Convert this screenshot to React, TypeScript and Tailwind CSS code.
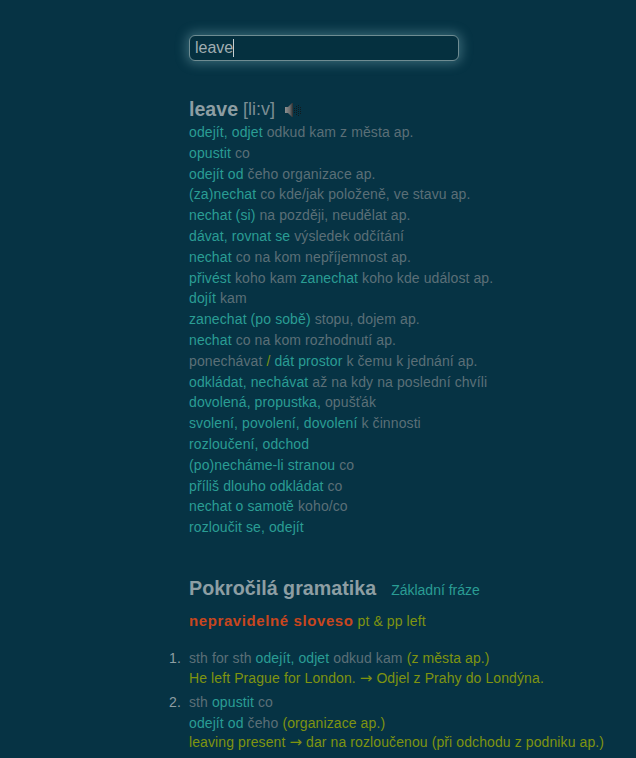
const T = ({ children }: { children: React.ReactNode }) => <span className="text-[#2a9d94]">{children}</span>;
const O = ({ children }: { children: React.ReactNode }) => <span className="text-[#7f9410]">{children}</span>;
const Arrow = () => <span className="font-['DejaVu_Sans',sans-serif] text-[15px] tracking-normal">→</span>;

const rows: React.ReactNode[] = [
  <><T>odejít, odjet</T> odkud kam z města ap.</>,
  <><T>opustit</T> co</>,
  <><T>odejít od</T> čeho organizace ap.</>,
  <><T>(za)nechat</T> co kde/jak položeně, ve stavu ap.</>,
  <><T>nechat (si)</T> na později, neudělat ap.</>,
  <><T>dávat, rovnat se</T> výsledek odčítání</>,
  <><T>nechat</T> co na kom nepříjemnost ap.</>,
  <><T>přivést</T> koho kam <T>zanechat</T> koho kde událost ap.</>,
  <><T>dojít</T> kam</>,
  <><T>zanechat (po sobě)</T> stopu, dojem ap.</>,
  <><T>nechat</T> co na kom rozhodnutí ap.</>,
  <>ponechávat <O>/</O> <T>dát prostor</T> k čemu k jednání ap.</>,
  <><T>odkládat, nechávat</T> až na kdy na poslední chvíli</>,
  <><T>dovolená, propustka,</T> opušťák</>,
  <><T>svolení, povolení, dovolení</T> k činnosti</>,
  <><T>rozloučení, odchod</T></>,
  <><T>(po)necháme-li stranou</T> co</>,
  <><T>příliš dlouho odkládat</T> co</>,
  <><T>nechat o samotě</T> koho/co</>,
  <><T>rozloučit se, odejít</T></>,
];

const dots = [
  [11, 6], [11, 8], [11, 10],
  [13, 4], [13, 6], [13, 8], [13, 10], [13, 12],
  [15, 3], [15, 5], [15, 7], [15, 9], [15, 11], [15, 13],
  [17, 5], [17, 7], [17, 9], [17, 11],
];

function Speaker() {
  return (
    <svg width="18" height="16" viewBox="0 0 18 16" className="ml-[8px] mt-[1px]">
      <defs>
        <linearGradient id="spk" x1="0" x2="1" y1="0" y2="0">
          <stop offset="0" stopColor="#8c8f90" />
          <stop offset="0.6" stopColor="#6a6d6e" />
          <stop offset="1" stopColor="#2b2d2e" />
        </linearGradient>
      </defs>
      <path d="M2 5 L5 5 L9 1 L10 1 L10 15 L9 15 L5 11 L2 11 Z" fill="url(#spk)" />
      <g fill="#101a1e">
        {dots.map(([x, y]) => <rect key={`${x}-${y}`} x={x} y={y} width="1" height="1" />)}
      </g>
    </svg>
  );
}

export default function App() {
  return (
    <div className="h-[758px] overflow-hidden bg-[#063344] pl-[189px] pt-[35px] font-['Liberation_Sans',sans-serif] text-[14px] leading-[20.8px] tracking-[0.1px] text-[#5b6f77]">
      <div className="flex h-[26px] w-[270px] items-center rounded-[6px] border border-[#6f8c92] bg-[#05303f] px-[5px] text-[16px] tracking-normal text-[#a0adb1] shadow-[0_0_11px_3px_rgba(130,180,190,0.38)]">
        leave<span className="h-[18px] w-px bg-[#c5cfd1]" />
      </div>

      <div className="mt-[36px] flex h-[24px] items-center tracking-normal text-[#8d9ea3]">
        <span className="text-[19.6px] font-bold">leave</span>
        <span className="ml-[5px] text-[18px] text-[#7b8d93]">[li:v]</span>
        <Speaker />
      </div>

      <div className="mt-[1px]">
        {rows.map((r, i) => <div key={i}>{r}</div>)}
      </div>

      <div className="mt-[36px] flex items-baseline">
        <span className="text-[19.7px] font-bold leading-[28px] tracking-normal text-[#8d9ea3]">Pokročilá gramatika</span>
        <span className="ml-[15px] tracking-normal text-[#2a9d94]">Základní fráze</span>
      </div>

      <div className="mt-[9px] text-[#7f9410]">
        <span className="text-[15px] font-bold tracking-[0.6px] text-[#c8461e]">nepravidelné sloveso</span> pt &amp; pp left
      </div>

      <ol className="mt-[16px]">
        <li className="relative">
          <span className="absolute left-[-20px] text-[#8d9ea3]">1.</span>
          <div>sth for sth <T>odejít, odjet</T> odkud kam <O>(z města ap.)</O></div>
          <div className="-mt-[1px] text-[#7f9410]">He left Prague for London. <Arrow /> Odjel z Prahy do Londýna.</div>
        </li>
        <li className="relative mt-[4px]">
          <span className="absolute left-[-20px] text-[#8d9ea3]">2.</span>
          <div>sth <T>opustit</T> co</div>
          <div><T>odejít od</T> čeho <O>(organizace ap.)</O></div>
          <div className="-mt-[2px] text-[#7f9410]">leaving present <Arrow /> dar na rozloučenou (při odchodu z podniku ap.)</div>
        </li>
      </ol>
    </div>
  );
}
